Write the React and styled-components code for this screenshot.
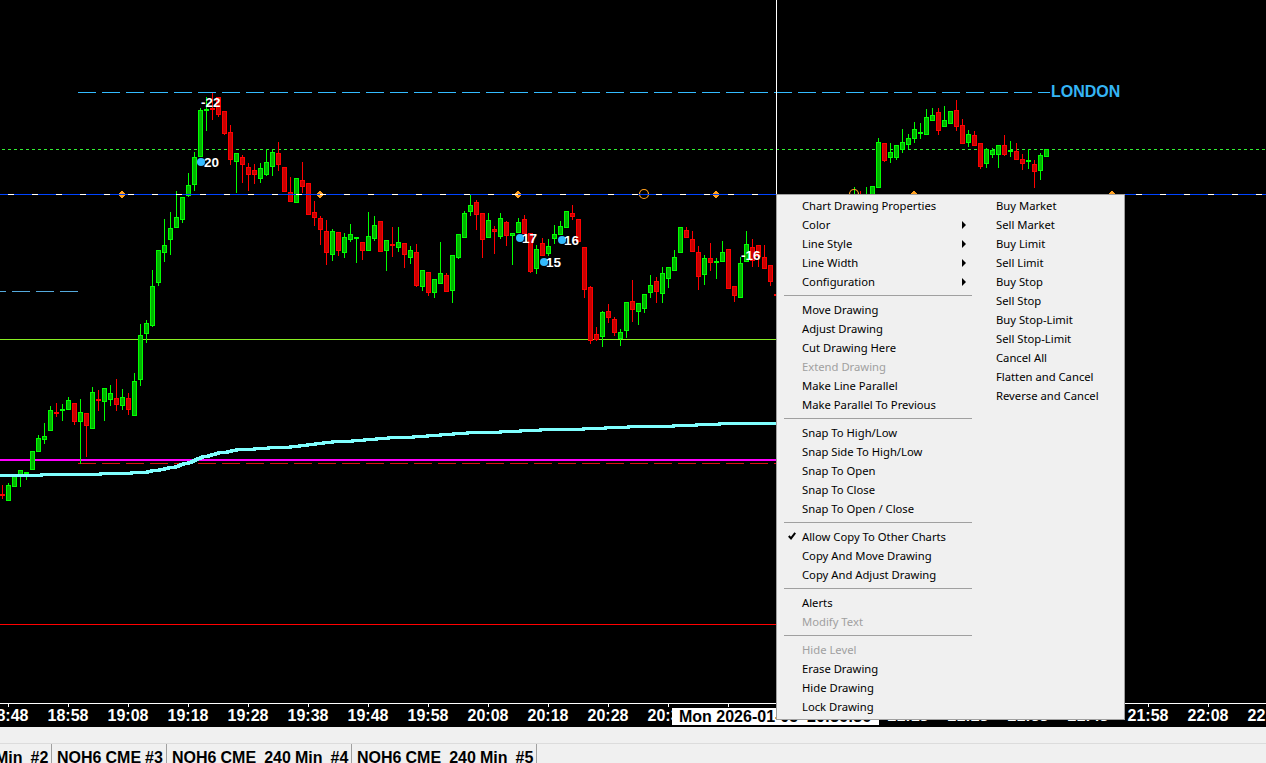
import React from 'react'
import styled, { createGlobalStyle } from 'styled-components'

const GlobalStyle = createGlobalStyle`
  html, body {
    margin: 0;
    padding: 0;
    background: #f0f0f0;
    overflow: hidden;
  }
`

const Page = styled.div`
  width: 1266px;
  height: 763px;
  overflow: hidden;
  display: flex;
  flex-direction: column;
  font-family: "Liberation Sans", Arial, sans-serif;
`

const ChartPane = styled.div`
  position: relative;
  height: 703px;
  flex: none;
  background: #000;
`

const ChartSvg = styled.svg`
  display: block;
`

const MenuPanel = styled.div`
  position: absolute;
  z-index: 5;
  left: 776px;
  top: 194px;
  width: 349px;
  height: 526px;
  box-sizing: border-box;
  padding: 2px 0;
  background: #f0f0f0;
  border: 1px solid #a0a0a0;
  display: grid;
  grid-template-columns: 194px 1fr;
  font-family: "Noto Sans", sans-serif;
  font-size: 11.25px;
  color: #000;
`

const MenuColumn = styled.div`
  display: flex;
  flex-direction: column;
`

const MenuItem = styled.div`
  height: 19px;
  box-sizing: border-box;
  padding: 0 5px 3px 11px;
  display: flex;
  align-items: center;
  white-space: nowrap;
  color: ${props => (props.$disabled ? '#a0a0a0' : '#000')};
`

const CheckSlot = styled.span`
  width: 14px;
  flex: none;
  display: flex;
  align-items: center;
`

const SubArrow = styled.span`
  margin: 2px 0 0 auto;
  width: 0;
  height: 0;
  border-top: 4px solid transparent;
  border-bottom: 4px solid transparent;
  border-left: 4px solid #000;
`

const Separator = styled.div`
  width: 188px;
  height: 1px;
  flex: none;
  margin: 3px 0 5px 7px;
  background: #a0a0a0;
`

const TimeAxis = styled.div`
  position: relative;
  height: 24px;
  flex: none;
  box-sizing: border-box;
  border-top: 1px solid #fff;
  background: #000;
  display: flex;
`

const TimeCell = styled.div`
  position: relative;
  width: 60px;
  flex: none;
  text-align: center;
  color: #fff;
  font-size: 16px;
  font-weight: bold;
  line-height: 22px;
  padding-top: 1px;

  &::before {
    content: '';
    position: absolute;
    left: 30px;
    top: 0;
    width: 1px;
    height: 3px;
    background: #fff;
  }

  &:first-child {
    margin-left: -22px;
  }
`

const CursorTime = styled.div`
  position: absolute;
  left: 672px;
  top: 4px;
  width: 207px;
  height: 17px;
  padding-left: 7px;
  box-sizing: border-box;
  background: #fff;
  color: #000;
  font-size: 16px;
  font-weight: bold;
  line-height: 17px;
  white-space: pre;
  overflow: hidden;
`

const StatusBar = styled.div`
  height: 17px;
  flex: none;
  box-sizing: border-box;
  background: #f0f0f0;
  border-bottom: 1px solid #dcdcdc;
`

const TabBar = styled.div`
  flex: 1;
  min-height: 0;
  display: flex;
  background: #f0f0f0;
  overflow: hidden;
`

const Tab = styled.div`
  flex: none;
  width: ${props => props.$width}px;
  height: 19px;
  padding-left: 5px;
  box-sizing: border-box;
  border-right: 1px solid #a0a0a0;
  color: #000;
  font-size: 16px;
  font-weight: bold;
  line-height: 28px;
  word-spacing: -0.4px;
  white-space: pre;
  overflow: hidden;

  &:first-child {
    margin-left: -133px;
  }
`

// x = 2 + 6 * index -> [color, high, body top, body bottom, low]
const LEFT_BARS = [
  ['r',485,494,494,498],['g',483,485,500,500],['g',476,476,486,486],['g',470,470,474,486],['g',472,472,472,479],
  ['g',451,451,469,469],['g',435,438,451,451],['g',423,436,439,443],['g',406,410,430,430],['r',403,412,412,416],
  ['g',404,409,409,420],['g',397,400,409,409],['r',403,403,421,424],['g',399,412,421,463],['r',413,413,425,456],
  ['g',387,392,428,428],['r',390,399,399,410],['g',388,388,401,420],['g',385,393,399,405],['r',379,398,404,410],
  ['g',389,397,405,409],['r',393,398,409,414],['g',373,381,415,415],['g',324,335,379,385],['g',320,323,333,342],
  ['g',270,286,325,326],['g',250,250,282,285],['g',219,245,252,261],['g',212,228,239,254],['g',191,217,227,227],
  ['g',197,197,219,222],['g',173,185,195,196],['g',152,157,184,190],['g',108,110,156,156],['g',97,109,109,130],
  ['r',93,108,108,119],['r',97,97,114,116],['r',111,111,133,134],['r',125,132,159,164],['g',153,153,161,192],
  ['r',155,157,164,182],['r',163,167,174,190],['r',164,170,174,183],['g',163,168,178,182],['g',149,162,174,175],
  ['g',149,152,166,175],['r',142,153,164,170],['r',167,167,191,191],['r',177,192,201,201],['g',178,178,202,202],
  ['r',162,180,186,192],['r',183,183,214,214],['r',201,212,217,225],['r',216,218,229,244],['r',220,231,252,264],
  ['g',229,231,254,260],['r',232,232,250,255],['g',233,237,252,257],['g',224,234,239,241],['g',237,237,237,262],
  ['r',242,242,250,259],['g',212,236,250,250],['g',216,225,238,240],['r',221,221,251,251],['g',240,240,250,270],
  ['r',227,244,244,256],['g',227,242,247,251],['r',243,243,254,267],['g',246,250,257,263],['r',244,252,285,286],
  ['g',270,270,286,290],['r',272,272,292,295],['g',279,279,292,297],['g',242,273,283,283],['r',273,275,291,291],
  ['g',255,255,290,302],['g',234,234,257,258],['g',211,213,237,237],['g',194,205,211,215],['r',200,202,214,229],
  ['r',213,213,239,257],['g',213,220,237,237],['r',226,229,231,253],['g',213,218,236,238],['r',221,222,235,245],
  ['g',233,233,235,264],['g',218,222,232,232],['r',215,219,233,233],['r',233,233,271,272],['g',245,249,268,273],
  ['r',238,243,255,255],['g',239,246,253,255],['g',225,234,238,243],['g',221,226,234,234],['g',211,211,227,227],
  ['r',205,213,216,219],['r',219,219,241,241],['r',247,247,289,297],['r',286,287,340,343],['r',327,334,339,340],
  ['g',311,312,336,346],['r',304,311,317,322],['r',317,319,332,335],['g',329,332,338,345],['g',302,302,330,337],
  ['r',280,301,309,321],['g',303,303,311,324],['g',294,294,308,312],['g',275,285,292,297],['r',277,281,291,302],
  ['g',267,273,293,302],['g',267,267,278,287],['g',250,257,270,270],['g',227,227,252,252],['r',227,230,237,237],
  ['r',231,239,251,251],['r',246,252,276,289],['g',255,258,274,284],['r',243,258,262,270],['g',258,261,262,278],
  ['g',241,252,261,261],['r',249,249,288,288],['r',286,286,295,301],['g',257,263,297,297],['g',231,244,261,261],
  ['r',239,247,260,266],['r',245,245,256,266],['r',245,257,268,268],['r',265,265,281,285],['r',294,294,294,294],
]

// these sit right of the menu, x given directly, low values run on behind the menu
const RIGHT_BARS = [
  [854,'g',187,200,200,200],[860,'r',191,200,200,200],[866,'g',187,200,200,200],[872,'g',186,186,200,200],
  [878,'g',138,142,187,187],[884,'r',143,143,160,161],[890,'g',143,152,157,162],[896,'g',145,145,157,159],
  [902,'g',129,142,149,152],[908,'g',134,138,144,148],[914,'g',122,129,138,142],[920,'g',123,132,132,138],
  [926,'g',109,117,134,134],[932,'g',108,115,120,120],[938,'r',108,112,130,134],[944,'g',106,120,126,126],
  [950,'g',111,111,123,123],[956,'r',100,110,126,130],[962,'r',119,125,143,143],[968,'g',130,134,142,146],
  [974,'r',131,135,145,145],[980,'r',143,143,166,168],[986,'g',148,149,163,167],[992,'g',148,150,154,157],
  [998,'g',145,145,154,167],[1004,'r',135,145,154,155],[1010,'g',141,150,150,156],[1016,'r',143,151,159,159],
  [1022,'r',154,159,163,169],[1028,'g',149,160,160,168],[1034,'r',160,164,171,187],[1040,'g',153,155,170,179],
  [1046,'g',149,149,156,156],
]

const BARS = [
  ...LEFT_BARS.map((b, i) => [2 + 6 * i, ...b]),
  ...RIGHT_BARS,
]

const CYAN_KNOTS = [
  [0,475],[82,474],[118,473],[143,472],[155,470],[172,467],[186,463],[204,456],[222,452],[240,449],[282,447],
  [340,441],[400,437],[480,432],[560,429],[650,426],[742,423],[776,423],
]

// the average only moves in one pixel steps, so walk each knot span a pixel at a time
const cyanPath = CYAN_KNOTS.reduce((d, [x, y], i) => {
  if (i === 0) return `M${x} ${y}`
  const [px, py] = CYAN_KNOTS[i - 1]
  const rise = py - y
  let out = d
  for (let s = 1; s <= rise; s++) {
    out += `H${Math.round(px + ((x - px) * s) / (rise + 1))}V${py - s}`
  }
  return out + `H${x}`
}, '')

const DIAMONDS = [122, 320, 518, 716, 914, 1112]
const BLUE_DASHES = Array.from({ length: 53 }, (_, i) => 8 + 24 * i)

const Candle = ({ x, color, high, top, bottom, low }) => {
  const line = color === 'g' ? '#00ff00' : '#ff0000'
  const fill = color === 'g' ? '#00b400' : '#c80000'
  return (
    <g>
      <rect x={x} y={high} width="1" height={low - high + 1} fill={line}/>
      {top === bottom
        ? <rect x={x - 2} y={top} width="5" height="2" fill={line}/>
        : <rect x={x - 1.5} y={top + 0.5} width="4" height={bottom - top} fill={fill} stroke={line}/>}
    </g>
  )
}

const Delta = ({ x, y, text, dot }) => (
  <g>
    {dot !== undefined && <circle cx={dot} cy={y - 5} r="4" fill="#33bbff"/>}
    <text x={x} y={y} fill="#fff" fontSize="13.5" fontWeight="bold" fontFamily="Liberation Sans">{text}</text>
  </g>
)

const Chart = () => (
  <ChartSvg width="1266" height="703" shapeRendering="crispEdges">
    <line x1="78" x2="1050" y1="92.5" y2="92.5" stroke="#33bbff" strokeDasharray="18 6"/>
    <line x1="2" x2="1266" y1="149.5" y2="149.5" stroke="#33ee33" strokeDasharray="3 3"/>
    <line x1="0" x2="78" y1="291.5" y2="291.5" stroke="#55aadd" strokeDasharray="6 6 18 6 18 6 18"/>
    <line x1="0" x2="776" y1="339.5" y2="339.5" stroke="#88ee22"/>
    <rect x="0" y="459" width="776" height="2" fill="#ff00ff"/>
    <line x1="78" x2="776" y1="463.5" y2="463.5" stroke="#dd1111" strokeDasharray="18 6"/>
    <line x1="0" x2="776" y1="624.5" y2="624.5" stroke="#ff0000"/>

    {BARS.map(([x, color, high, top, bottom, low]) => (
      <Candle key={x} x={x} color={color} high={high} top={top} bottom={bottom} low={low}/>
    ))}

    <path d={cyanPath} fill="none" stroke="#7fffff" strokeWidth="3"/>

    {DIAMONDS.map(x => (
      <path key={x} d={`M${x - 1} 191h2v1h1v1h1v3h-1v1h-1v1h-2v-1h-1v-1h-1v-3h1v-1h1z`} fill="#ffa020"/>
    ))}
    <circle cx="644" cy="194" r="4.5" fill="none" stroke="#ffa020" strokeWidth="1.2" shapeRendering="auto"/>
    <circle cx="854" cy="194" r="4.5" fill="none" stroke="#ffa020" strokeWidth="1.2" shapeRendering="auto"/>
    <rect x="0" y="194" width="1266" height="1" fill="#0044ff"/>
    {BLUE_DASHES.map(x => <rect key={x} x={x} y="194" width="6" height="1" fill="#fff"/>)}

    <rect x="776" y="0" width="1" height="194" fill="#fff"/>

    <g shapeRendering="auto">
      <Delta x={201} y={107} text="-22"/>
      <Delta x={204} y={167} text="20" dot={201}/>
      <Delta x={522} y={243} text="17" dot={520}/>
      <Delta x={564} y={245} text="16" dot={562}/>
      <Delta x={546} y={267} text="15" dot={544}/>
      <Delta x={741} y={260} text="-16"/>
      <text x="1051" y="97" fill="#35b5f5" fontSize="16" fontWeight="bold" fontFamily="Liberation Sans">LONDON</text>
    </g>
  </ChartSvg>
)

const MENU_LEFT = [
  [
    { label: 'Chart Drawing Properties' },
    { label: 'Color', sub: true },
    { label: 'Line Style', sub: true },
    { label: 'Line Width', sub: true },
    { label: 'Configuration', sub: true },
  ],
  [
    { label: 'Move Drawing' },
    { label: 'Adjust Drawing' },
    { label: 'Cut Drawing Here' },
    { label: 'Extend Drawing', disabled: true },
    { label: 'Make Line Parallel' },
    { label: 'Make Parallel To Previous' },
  ],
  [
    { label: 'Snap To High/Low' },
    { label: 'Snap Side To High/Low' },
    { label: 'Snap To Open' },
    { label: 'Snap To Close' },
    { label: 'Snap To Open / Close' },
  ],
  [
    { label: 'Allow Copy To Other Charts', checked: true },
    { label: 'Copy And Move Drawing' },
    { label: 'Copy And Adjust Drawing' },
  ],
  [
    { label: 'Alerts' },
    { label: 'Modify Text', disabled: true },
  ],
  [
    { label: 'Hide Level', disabled: true },
    { label: 'Erase Drawing' },
    { label: 'Hide Drawing' },
    { label: 'Lock Drawing' },
  ],
]

const MENU_RIGHT = [
  'Buy Market', 'Sell Market', 'Buy Limit', 'Sell Limit', 'Buy Stop', 'Sell Stop',
  'Buy Stop-Limit', 'Sell Stop-Limit', 'Cancel All', 'Flatten and Cancel', 'Reverse and Cancel',
]

const ContextMenu = () => (
  <MenuPanel>
    <MenuColumn>
      {MENU_LEFT.map((group, g) => (
        <React.Fragment key={g}>
          {g > 0 && <Separator/>}
          {group.map(item => (
            <MenuItem key={item.label} $disabled={item.disabled}>
              <CheckSlot>
                {item.checked && (
                  <svg width="8" height="8" viewBox="0 0 8 8">
                    <path d="M.8 4l2.2 2.4L7.2 .8" fill="none" stroke="#000" strokeWidth="2"/>
                  </svg>
                )}
              </CheckSlot>
              {item.label}
              {item.sub && <SubArrow/>}
            </MenuItem>
          ))}
        </React.Fragment>
      ))}
    </MenuColumn>
    <MenuColumn>
      {MENU_RIGHT.map(label => (
        <MenuItem key={label}><CheckSlot/>{label}</MenuItem>
      ))}
    </MenuColumn>
  </MenuPanel>
)

// 20:48 to 21:08 lie fully under the cursor time box, only their ticks show
const TIMES = [
  '18:48', '18:58', '19:08', '19:18', '19:28', '19:38', '19:48', '19:58', '20:08', '20:18', '20:28',
  '20:38', '', '', '', '21:18', '21:28', '21:38', '21:48', '21:58', '22:08', '22:18',
]

const TABS = [
  { label: 'NQH6 CME  240 Min  #2', width: 185 },
  { label: 'NQH6 CME #3', width: 115 },
  { label: 'NQH6 CME  240 Min  #4', width: 185 },
  { label: 'NQH6 CME  240 Min  #5', width: 185 },
]

const App = () => (
  <Page>
    <GlobalStyle/>
    <ChartPane>
      <Chart/>
      <ContextMenu/>
    </ChartPane>
    <TimeAxis>
      {TIMES.map((t, i) => <TimeCell key={i}>{t}</TimeCell>)}
      <CursorTime>Mon 2026-01-05  20:36:36</CursorTime>
    </TimeAxis>
    <StatusBar/>
    <TabBar>
      {TABS.map(t => <Tab key={t.label} $width={t.width}>{t.label}</Tab>)}
    </TabBar>
  </Page>
)

export default App
